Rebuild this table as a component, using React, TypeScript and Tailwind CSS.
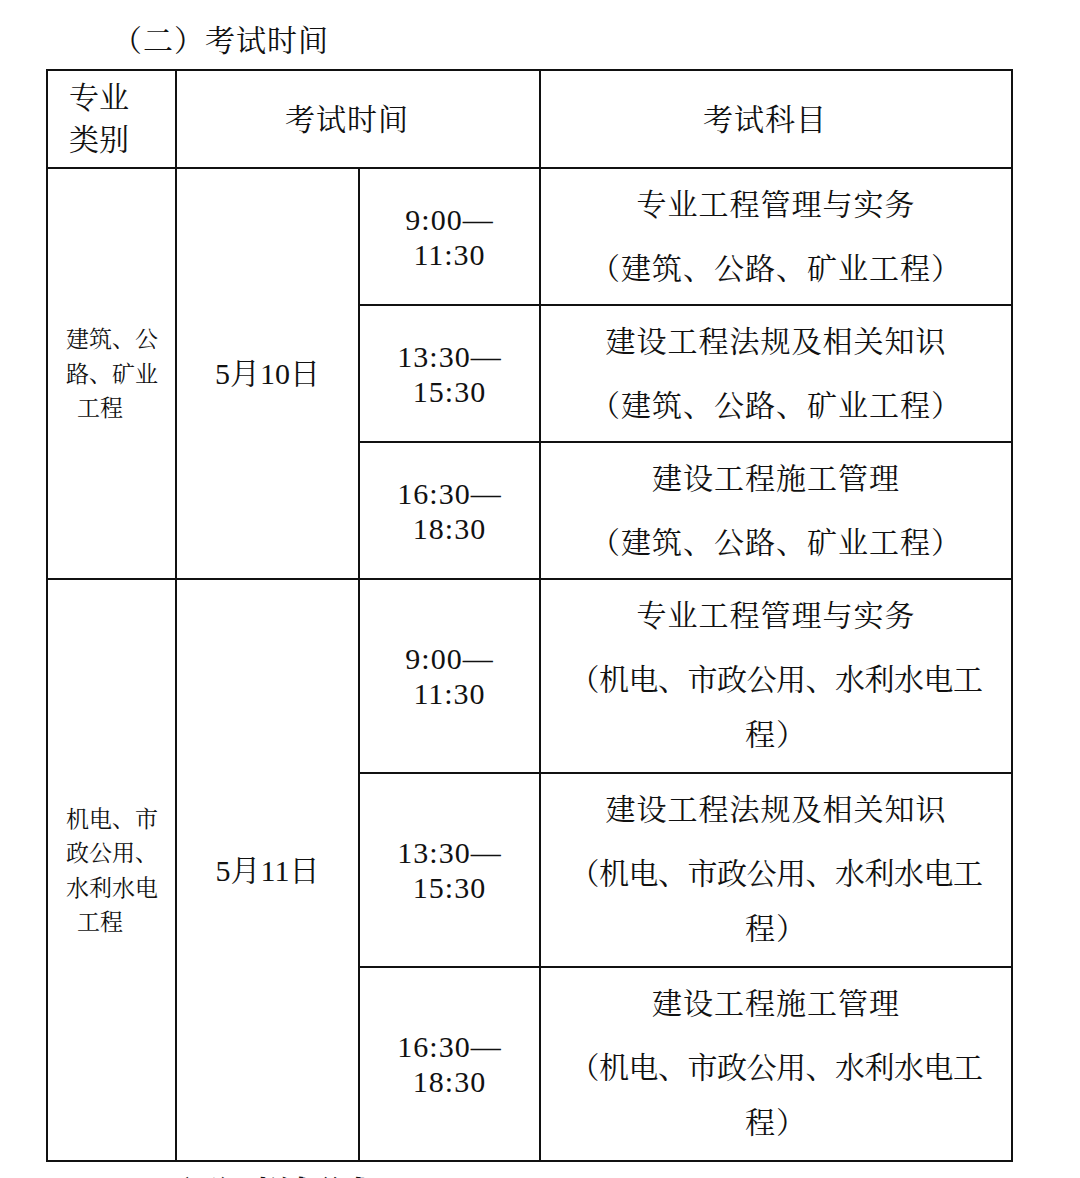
import React from "react";

const Cell = ({ className = "", children }: { className?: string; children?: React.ReactNode }) => (
  <div className={`bg-white flex ${className}`}>{children}</div>
);

const Time = ({ a, b }: { a: string; b: string }) => (
  <div className="flex flex-col items-center text-[30px] leading-[35px] tracking-[1px]">
    <div>{a}</div>
    <div>{b}</div>
  </div>
);

const Subject = ({ lines }: { lines: string[][] }) => (
  <div className="flex flex-col items-center w-full pt-[8px] gap-[9px] text-[30px] leading-[55px]">
    {lines.map((p, i) => (
      <div key={i} className="flex flex-col items-center">
        {p.map((l, j) => (
          <div key={j} className={l.length > 12 ? "tracking-[-0.5px]" : "tracking-[1px]"}>
            {l}
          </div>
        ))}
      </div>
    ))}
  </div>
);

export default function App() {
  const a = "（建筑、公路、矿业工程）";
  const b1 = "（机电、市政公用、水利水电工";
  const b2 = "程）";
  return (
    <div className="w-[1080px] h-[1178px] overflow-hidden bg-white text-[#111] font-[family-name:Liberation_Serif,Noto_Serif_CJK_SC,Noto_Sans_CJK_SC,serif]">
      <div className="h-[69px] pt-[24px] pl-[112px] text-[30px] leading-[34px] tracking-[1px]">（二）考试时间</div>
      <div className="ml-[46px] w-fit grid grid-cols-[127px_181px_179px_470px] grid-rows-[96px_135px_135px_135px_192px_192px_192px] gap-[2px] p-[2px] bg-[#111]">
        <Cell className="flex-col justify-center pl-[21px] text-[30px] leading-[42px]">
          <div>专业</div>
          <div>类别</div>
        </Cell>
        <Cell className="col-span-2 items-center justify-center pr-[22px] text-[30px] tracking-[1px]">考试时间</Cell>
        <Cell className="items-center justify-center pr-[22px] text-[30px] tracking-[1px]">考试科目</Cell>

        <Cell className="row-span-3 flex-col justify-center pl-[18px] pt-[3px] text-[23px] leading-[34.5px]">
          <div>建筑、公</div>
          <div>路、矿业</div>
          <div className="pl-[11px]">工程</div>
        </Cell>
        <Cell className="row-span-3 items-center justify-center text-[30px]">5月10日</Cell>
        <Cell className="items-center justify-center">
          <Time a="9:00—" b="11:30" />
        </Cell>
        <Cell>
          <Subject lines={[["专业工程管理与实务"], [a]]} />
        </Cell>
        <Cell className="items-center justify-center">
          <Time a="13:30—" b="15:30" />
        </Cell>
        <Cell>
          <Subject lines={[["建设工程法规及相关知识"], [a]]} />
        </Cell>
        <Cell className="items-center justify-center">
          <Time a="16:30—" b="18:30" />
        </Cell>
        <Cell>
          <Subject lines={[["建设工程施工管理"], [a]]} />
        </Cell>

        <Cell className="row-span-3 flex-col justify-center pl-[18px] pt-[3px] text-[23px] leading-[34.5px]">
          <div>机电、市</div>
          <div>政公用、</div>
          <div>水利水电</div>
          <div className="pl-[11px]">工程</div>
        </Cell>
        <Cell className="row-span-3 items-center justify-center text-[30px]">5月11日</Cell>
        <Cell className="items-center justify-center">
          <Time a="9:00—" b="11:30" />
        </Cell>
        <Cell>
          <Subject lines={[["专业工程管理与实务"], [b1, b2]]} />
        </Cell>
        <Cell className="items-center justify-center">
          <Time a="13:30—" b="15:30" />
        </Cell>
        <Cell>
          <Subject lines={[["建设工程法规及相关知识"], [b1, b2]]} />
        </Cell>
        <Cell className="items-center justify-center">
          <Time a="16:30—" b="18:30" />
        </Cell>
        <Cell>
          <Subject lines={[["建设工程施工管理"], [b1, b2]]} />
        </Cell>
      </div>
      <div className="pt-[12px] pl-[160px] text-[30px] leading-[36px] font-bold">（三）考试形式</div>
    </div>
  );
}
